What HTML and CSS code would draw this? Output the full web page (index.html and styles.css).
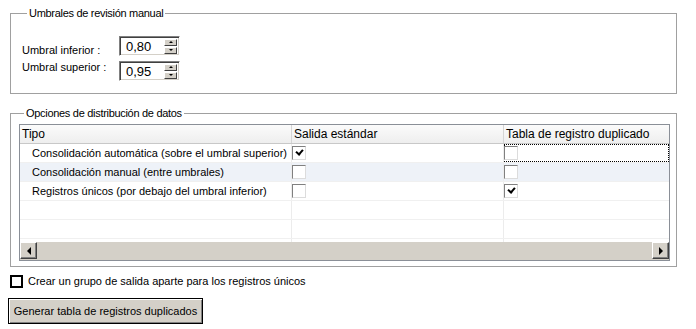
FILE: index.html
```html
<!DOCTYPE html>
<html>
<head>
  <title>Registros duplicados</title>
  <meta charset="utf-8">
  <link rel="stylesheet" href="styles.css">
</head>
<body>
  <div class="page">
    <fieldset class="group group-thresholds">
      <legend>Umbrales de revisión manual</legend>
      <div class="thresholds">
        <div class="threshold-labels">
          <div>Umbral inferior :</div>
          <div>Umbral superior :</div>
        </div>
        <div class="threshold-spins">
          <div class="spin">
            <span class="spin-value">0,80</span>
            <div class="spin-buttons">
              <span class="spin-btn up"></span>
              <span class="spin-btn down"></span>
            </div>
          </div>
          <div class="spin">
            <span class="spin-value">0,95</span>
            <div class="spin-buttons">
              <span class="spin-btn up"></span>
              <span class="spin-btn down"></span>
            </div>
          </div>
        </div>
      </div>
    </fieldset>

    <fieldset class="group group-options">
      <legend>Opciones de distribución de datos</legend>
      <div class="grid">
        <div class="grid-row grid-head">
          <div class="cell col-type">Tipo</div>
          <div class="cell col-std">Salida estándar</div>
          <div class="cell col-dup">Tabla de registro duplicado</div>
        </div>
        <div class="grid-body">
          <div class="grid-row">
            <div class="cell col-type indent">Consolidación automática (sobre el umbral superior)</div>
            <div class="cell col-std"><span class="cb checked"></span></div>
            <div class="cell col-dup focus"><span class="cb"></span></div>
          </div>
          <div class="grid-row alt">
            <div class="cell col-type indent">Consolidación manual (entre umbrales)</div>
            <div class="cell col-std"><span class="cb"></span></div>
            <div class="cell col-dup"><span class="cb"></span></div>
          </div>
          <div class="grid-row">
            <div class="cell col-type indent">Registros únicos (por debajo del umbral inferior)</div>
            <div class="cell col-std"><span class="cb"></span></div>
            <div class="cell col-dup"><span class="cb checked"></span></div>
          </div>
          <div class="grid-row">
            <div class="cell col-type"></div>
            <div class="cell col-std"></div>
            <div class="cell col-dup"></div>
          </div>
          <div class="grid-row">
            <div class="cell col-type"></div>
            <div class="cell col-std"></div>
            <div class="cell col-dup"></div>
          </div>
          <div class="grid-row">
            <div class="cell col-type"></div>
            <div class="cell col-std"></div>
            <div class="cell col-dup"></div>
          </div>
        </div>
        <div class="hscroll">
          <span class="scroll-btn left"></span>
          <span class="scroll-track"></span>
          <span class="scroll-btn right"></span>
        </div>
      </div>
    </fieldset>

    <label class="check-row">
      <span class="check-box"></span>
      <span>Crear un grupo de salida aparte para los registros únicos</span>
    </label>

    <button class="action">Generar tabla de registros duplicados</button>
  </div>
</body>
</html>
```

FILE: styles.css
```css
* {
  box-sizing: border-box;
}

body {
  margin: 0;
  background: #fff;
  color: #000;
  font-family: "Liberation Sans", Arial, sans-serif;
  font-size: 11px;
}

.page {
  padding: 6px 19px 0 10px;
}

/* group boxes */

.group {
  margin: 0;
  padding: 0;
  min-width: 0;
  border: 1px solid #a0a0a0;
}

.group legend {
  margin-left: 5px;
  padding: 0 2px;
  font-size: 11px;
  line-height: 14px;
  letter-spacing: -0.3px;
}

.group-thresholds {
  padding: 16px 0 12px 11px;
}

.group-options {
  margin-top: 12px;
  padding: 4px 6px 5px 8px;
}

/* spin boxes */

.thresholds {
  display: flex;
}

.threshold-labels {
  width: 97px;
  padding-top: 6px;
  line-height: 17px;
}

.threshold-spins {
  display: flex;
  flex-direction: column;
  gap: 5px;
}

.spin {
  width: 61px;
  height: 20px;
  display: flex;
  align-items: center;
  justify-content: space-between;
  padding: 0 2px 0 6px;
  border: 1px solid;
  border-color: #808080 #fff #fff #808080;
  box-shadow: inset 1px 1px 0 #404040, inset -1px -1px 0 #d4d0c8;
}

.spin-value {
  font-size: 13px;
  padding-top: 1px;
}

.spin-buttons {
  display: flex;
  flex-direction: column;
  gap: 1px;
}

.spin-btn {
  width: 13px;
  height: 7px;
  background: #d4d0c8;
  border: 1px solid;
  border-color: #fff #404040 #404040 #fff;
  display: flex;
  align-items: center;
  justify-content: center;
}

.spin-btn::after {
  content: '';
  border-left: 2px solid transparent;
  border-right: 2px solid transparent;
}

.spin-btn.up::after {
  border-bottom: 2px solid #000;
}

.spin-btn.down::after {
  border-top: 2px solid #000;
}

/* data grid */

.grid {
  border: 1px solid #8a8f97;
}

.grid-row {
  display: flex;
  height: 19px;
  border-bottom: 1px solid #f0f0f0;
}

.grid-row.alt {
  background: #eef2f8;
}

.grid-head {
  height: 19px;
  background: linear-gradient(#fbfbfb, #eeeeee);
  border-bottom: 1px solid #c8c8c8;
}

.grid-head .cell {
  padding-left: 2px;
  font-size: 12px;
  border-right-color: #d5d5d5;
}

.grid-body {
  height: 98px;
  overflow: hidden;
}

.cell {
  display: flex;
  align-items: center;
  border-right: 1px solid #ececec;
  white-space: nowrap;
  overflow: hidden;
}

.cell.indent {
  padding-left: 12px;
}

.col-type {
  width: 272px;
}

.col-std {
  width: 212px;
}

.col-dup {
  flex: 1;
  border-right: none;
}

.cell.focus {
  outline: 1px dotted #000;
  outline-offset: -1px;
}

.cb {
  width: 14px;
  height: 14px;
  border: 1px solid;
  border-color: #808080 #dcdcdc #dcdcdc #808080;
  background: #fff;
  position: relative;
}

.cb.checked::after {
  content: '';
  position: absolute;
  left: 3px;
  top: 2px;
  width: 5px;
  height: 3px;
  border-left: 2px solid #000;
  border-bottom: 2px solid #000;
  transform: rotate(-50deg);
}

/* scroll bar */

.hscroll {
  display: flex;
  height: 18px;
  background: #d4d0c8;
}

.scroll-track {
  flex: 1;
}

.scroll-btn {
  width: 17px;
  height: 17px;
  border: 1px solid;
  border-color: #fff #404040 #404040 #fff;
  box-shadow: inset -1px -1px 0 #808080;
  display: flex;
  align-items: center;
  justify-content: center;
}

.scroll-btn::after {
  content: '';
  border-top: 4px solid transparent;
  border-bottom: 4px solid transparent;
}

.scroll-btn.left::after {
  border-right: 4px solid #000;
}

.scroll-btn.right::after {
  border-left: 4px solid #000;
}

/* bottom controls */

.check-row {
  display: flex;
  align-items: center;
  gap: 5px;
  margin-top: 7px;
  height: 14px;
  font-size: 11px;
}

.check-box {
  width: 13px;
  height: 13px;
  border: 2px solid #000;
}

.action {
  display: block;
  margin: 10px 0 0 -2px;
  width: 195px;
  height: 26px;
  padding: 0;
  font-family: "Liberation Sans", Arial, sans-serif;
  font-size: 11px;
  color: #000;
  background: #d4d0c8;
  border: 1px solid #000;
  box-shadow: inset 1px 1px 0 #fff, inset -1px -1px 0 #808080;
}
```
